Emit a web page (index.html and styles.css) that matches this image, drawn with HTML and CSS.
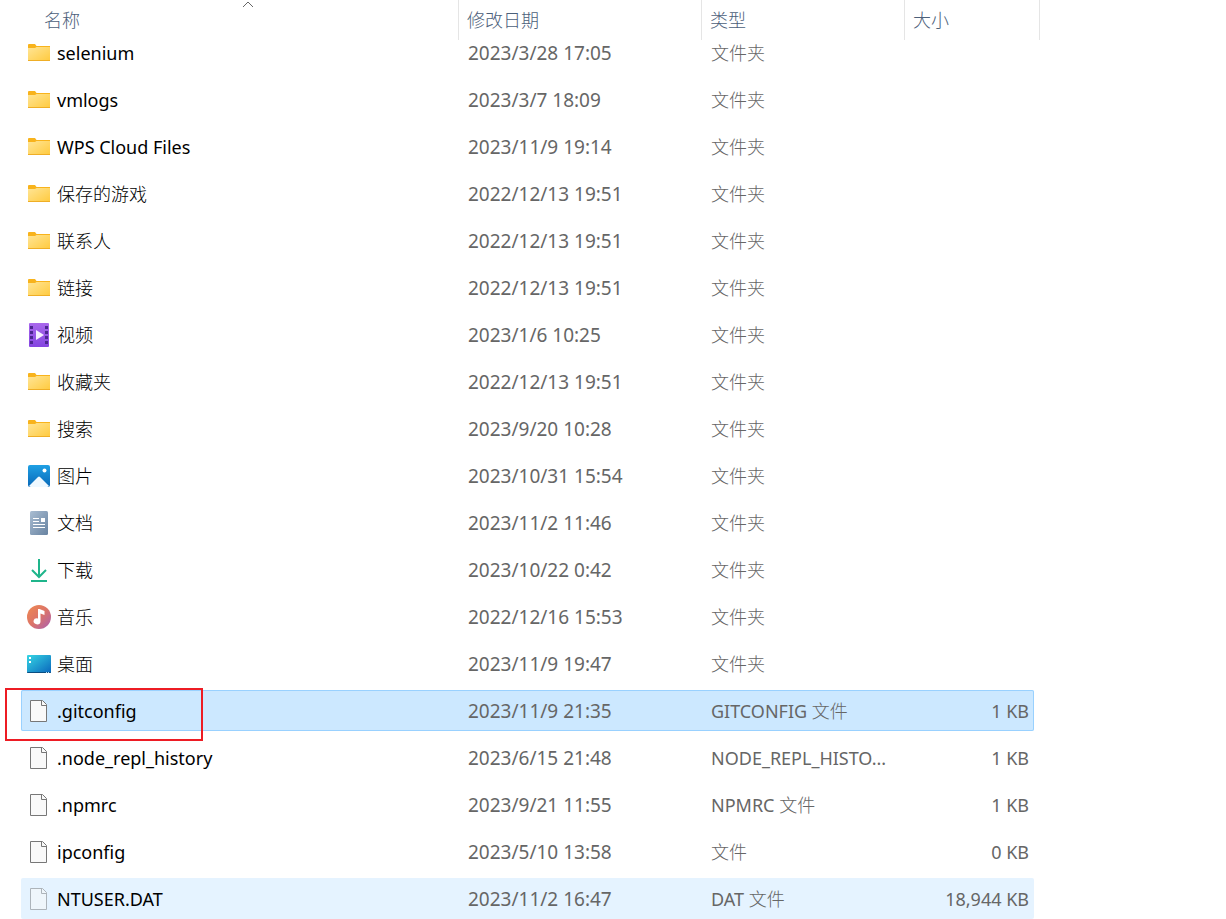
FILE: index.html
```html
<!DOCTYPE html>
<html lang="zh-CN">
<head>
    <meta charset="UTF-8">
    <meta name="viewport" content="width=device-width, initial-scale=1.0">
    <title>文件列表</title>
    <link rel="stylesheet" href="styles.css">
</head>
<body>
    <!-- iconos -->
    <svg class="sprites" aria-hidden="true">
        <defs>
            <linearGradient id="gFolder" x1="0" y1="0" x2="1" y2="1">
                <stop offset="0" stop-color="#ffe596" /><stop offset="1" stop-color="#ffca3e" />
            </linearGradient>
            <linearGradient id="gVideo" x1="0" y1="0" x2="0" y2="1">
                <stop offset="0" stop-color="#a968ec" /><stop offset="1" stop-color="#8445e0" />
            </linearGradient>
            <linearGradient id="gImage" x1="0" y1="0" x2="0" y2="1">
                <stop offset="0" stop-color="#1fa0e4" /><stop offset="1" stop-color="#0868b8" />
            </linearGradient>
            <linearGradient id="gDoc" x1="0" y1="0" x2="1" y2="1">
                <stop offset="0" stop-color="#a9bdd2" /><stop offset="1" stop-color="#6883a1" />
            </linearGradient>
            <linearGradient id="gMusic" x1="0" y1="0" x2="1" y2="1">
                <stop offset="0" stop-color="#f08a50" /><stop offset="0.5" stop-color="#dc7468" /><stop offset="1" stop-color="#a960b4" />
            </linearGradient>
            <linearGradient id="gDesk" x1="0" y1="0" x2="1" y2="1">
                <stop offset="0" stop-color="#36d6e4" /><stop offset="1" stop-color="#0a66bc" />
            </linearGradient>
        </defs>
        <symbol id="folder" viewBox="0 0 24 24">
            <path d="M1 4a1 1 0 0 1 1-1h6l1.500 2h13.500v4h-22z" fill="#f8b31c" />
            <path d="M1 7h7l1.500-1h13.500v14h-22z" fill="url(#gFolder)" />
            <path d="M1 19h22v1h-22z" fill="#efae26" />
        </symbol>
        <symbol id="video" viewBox="0 0 24 24">
            <rect x="2" y="0" width="20" height="24" rx="1" fill="url(#gVideo)" />
            <path d="M3 3h3v3h-3zM3 8h3v3h-3zM3 13h3v3h-3zM3 18h3v3h-3zM18 3h3v3h-3zM18 8h3v3h-3zM18 13h3v3h-3zM18 18h3v3h-3z" fill="#4c2790" />
            <path d="M9 7l8 5-8 5z" fill="#f6efff" />
        </symbol>
        <symbol id="image" viewBox="0 0 24 24">
            <rect x="1" y="1" width="22" height="22" rx="2" fill="url(#gImage)" />
            <path d="M2 22l9-9q1-1 2 0l9 9q-1 1-2 1h-16q-1 0-2-1z" fill="#eef8ff" />
            <circle cx="17.500" cy="6.500" r="2" fill="#fff" />
        </symbol>
        <symbol id="doc" viewBox="0 0 24 24">
            <rect x="3" y="0" width="18" height="24" rx="1.500" fill="url(#gDoc)" />
            <path d="M6 7h6v1h-6zM6 10h6v1h-6zM6 13h12v1h-12zM6 16h12v1h-12zM14 7h4v4h-4z" fill="#fff" />
        </symbol>
        <symbol id="download" viewBox="0 0 24 24">
            <path d="M12 1v18M5 12l7 7 7-7M4 23h16" fill="none" stroke="#1fb58b" stroke-width="2" />
        </symbol>
        <symbol id="music" viewBox="0 0 24 24">
            <circle cx="12" cy="12" r="12" fill="url(#gMusic)" />
            <path d="M11 4h1.500l5 2v4l-4-1.500v8a3.500 3 0 1 1-2.500-3z" fill="#fff" />
        </symbol>
        <symbol id="desktop" viewBox="0 0 24 24">
            <rect x="0" y="3" width="24" height="18" rx="1" fill="url(#gDesk)" />
            <path d="M0 20h24q0 1-1 1h-22q-1 0-1-1z" fill="#0b4d80" />
            <path d="M2 5h2v2h-2zM2 9h2v2h-2z" fill="#fff" />
            <path d="M19 20h1v1h-1zM21 20h1v1h-1z" fill="#b8e0f4" />
        </symbol>
        <symbol id="file" viewBox="0 0 24 24">
            <path d="M3.500 1.500h12l4 4v17h-16z" fill="#f9f9f9" stroke="#777" />
            <path d="M14.500 1.500v5h5" fill="none" stroke="#777" />
        </symbol>
    </svg>

    <table class="lista">
        <thead>
            <tr>
                <th scope="col" aria-sort="ascending">
                    <svg class="flecha" viewBox="0 0 12 7" aria-hidden="true"><path d="M1 6l5-5 5 5" fill="none" stroke="#666" /></svg>
                    <button type="button">名称</button>
                </th>
                <th scope="col"><button type="button">修改日期</button></th>
                <th scope="col"><button type="button">类型</button></th>
                <th scope="col"><button type="button">大小</button></th>
            </tr>
        </thead>
        <tbody>
            <tr><td><svg class="icono"><use href="#folder" /></svg>selenium</td><td>2023/3/28 17:05</td><td class="zh">文件夹</td><td></td></tr>
            <tr><td><svg class="icono"><use href="#folder" /></svg>vmlogs</td><td>2023/3/7 18:09</td><td class="zh">文件夹</td><td></td></tr>
            <tr><td><svg class="icono"><use href="#folder" /></svg>WPS Cloud Files</td><td>2023/11/9 19:14</td><td class="zh">文件夹</td><td></td></tr>
            <tr><td class="zh"><svg class="icono"><use href="#folder" /></svg>保存的游戏</td><td>2022/12/13 19:51</td><td class="zh">文件夹</td><td></td></tr>
            <tr><td class="zh"><svg class="icono"><use href="#folder" /></svg>联系人</td><td>2022/12/13 19:51</td><td class="zh">文件夹</td><td></td></tr>
            <tr><td class="zh"><svg class="icono"><use href="#folder" /></svg>链接</td><td>2022/12/13 19:51</td><td class="zh">文件夹</td><td></td></tr>
            <tr><td class="zh"><svg class="icono"><use href="#video" /></svg>视频</td><td>2023/1/6 10:25</td><td class="zh">文件夹</td><td></td></tr>
            <tr><td class="zh"><svg class="icono"><use href="#folder" /></svg>收藏夹</td><td>2022/12/13 19:51</td><td class="zh">文件夹</td><td></td></tr>
            <tr><td class="zh"><svg class="icono"><use href="#folder" /></svg>搜索</td><td>2023/9/20 10:28</td><td class="zh">文件夹</td><td></td></tr>
            <tr><td class="zh"><svg class="icono"><use href="#image" /></svg>图片</td><td>2023/10/31 15:54</td><td class="zh">文件夹</td><td></td></tr>
            <tr><td class="zh"><svg class="icono"><use href="#doc" /></svg>文档</td><td>2023/11/2 11:46</td><td class="zh">文件夹</td><td></td></tr>
            <tr><td class="zh"><svg class="icono"><use href="#download" /></svg>下载</td><td>2023/10/22 0:42</td><td class="zh">文件夹</td><td></td></tr>
            <tr><td class="zh"><svg class="icono"><use href="#music" /></svg>音乐</td><td>2022/12/16 15:53</td><td class="zh">文件夹</td><td></td></tr>
            <tr><td class="zh"><svg class="icono"><use href="#desktop" /></svg>桌面</td><td>2023/11/9 19:47</td><td class="zh">文件夹</td><td></td></tr>
            <tr class="seleccionado" aria-selected="true"><td><svg class="icono"><use href="#file" /></svg>.gitconfig<span class="marco"></span></td><td>2023/11/9 21:35</td><td>GITCONFIG <span class="zh">文件</span></td><td>1 KB</td></tr>
            <tr><td><svg class="icono"><use href="#file" /></svg>.node_repl_history</td><td>2023/6/15 21:48</td><td>NODE_REPL_HISTO...</td><td>1 KB</td></tr>
            <tr><td><svg class="icono"><use href="#file" /></svg>.npmrc</td><td>2023/9/21 11:55</td><td>NPMRC <span class="zh">文件</span></td><td>1 KB</td></tr>
            <tr><td><svg class="icono"><use href="#file" /></svg>ipconfig</td><td>2023/5/10 13:58</td><td class="zh">文件</td><td>0 KB</td></tr>
            <tr class="resaltado"><td><svg class="icono oculto"><use href="#file" /></svg>NTUSER.DAT</td><td>2023/11/2 16:47</td><td>DAT <span class="zh">文件</span></td><td>18,944 KB</td></tr>
        </tbody>
    </table>
</body>
</html>
```
FILE: styles.css
```css
* {
    margin: 0;
    padding: 0;
    box-sizing: border-box;
}

body {
    background: #fff;
    color: #000;
    font-family: "Noto Sans", "Noto Sans CJK SC", sans-serif;
    font-size: 18px;
}

.sprites {
    position: absolute;
    width: 0;
    height: 0;
}

.lista {
    display: block;
    margin: 0 192px 0 21px;
}

.lista tr {
    display: grid;
    grid-template-columns: 1fr 243px 203px 130px;
}

/* cabecera */
.lista thead {
    display: block;
    margin-right: -6px;
}

.lista thead tr {
    grid-template-columns: 1fr 243px 203px 136px;
    height: 40px;
}

th {
    position: relative;
    border-left: 1px solid #e5e5e5;
    padding-left: 8px;
    text-align: left;
}

th:first-child {
    border-left: none;
    margin-left: 16px;
    padding-left: 7px;
}

th:last-child {
    border-right: 1px solid #e5e5e5;
}

th button {
    width: 100%;
    height: 38px;
    border: none;
    background: none;
    color: #4c607a;
    font: inherit;
    font-weight: 300;
    text-align: left;
}

.flecha {
    position: absolute;
    top: 1px;
    left: 50%;
    width: 12px;
    height: 7px;
    margin-left: -6px;
}

/* filas */
.lista tbody {
    display: grid;
    gap: 6px;
    margin-top: -8px;
}

.lista tbody tr {
    grid-template-rows: 41px;
    border-radius: 2px;
}

td {
    padding-left: 10px;
    color: #666;
    line-height: 42px;
    white-space: nowrap;
}

td:first-child {
    position: relative;
    display: flex;
    align-items: center;
    gap: 6px;
    padding-left: 6px;
    color: #000;
    line-height: 40px;
}

td:nth-child(2) {
    font-size: 19px;
}

td:last-child {
    padding-right: 5px;
    text-align: right;
}

/* los caracteres chinos van mas finos */
.zh { font-weight: 300; }

.icono {
    width: 24px;
    height: 24px;
}

.oculto { opacity: 0.5; }

.seleccionado {
    background: #cce8ff;
    box-shadow: inset 0 0 0 1px #99d1ff;
}

.resaltado { background: #e5f3ff; }

.marco {
    position: absolute;
    top: -2px;
    left: -16px;
    width: 198px;
    height: 53px;
    border: 2px solid #ed1c24;
}
```
